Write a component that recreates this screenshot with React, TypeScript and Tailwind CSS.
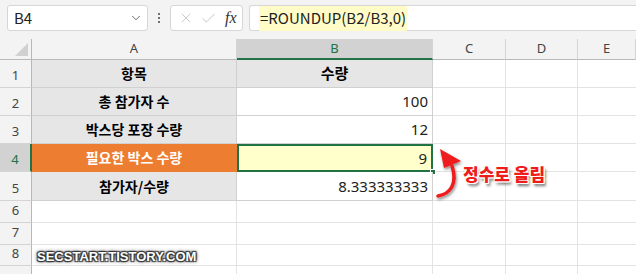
import { ChevronDown, X, Check } from "lucide-react";

const cols = ["A", "B", "C", "D", "E"];

const rows = [
  { n: 1, a: "항목", b: "수량", bHead: true, h: "h-[28px]" },
  { n: 2, a: "총 참가자 수", b: "100", h: "h-[28px]" },
  { n: 3, a: "박스당 포장 수량", b: "12", h: "h-[28px]" },
  { n: 4, a: "필요한 박스 수량", b: "9", h: "h-[28px]", active: true },
  { n: 5, a: "참가자/수량", b: "8.333333333", h: "h-[29px]" },
];

const empties = [
  { n: 6, label: "6", h: "h-[22px]" },
  { n: 7, label: "7", h: "h-[22px]" },
  { n: 8, label: "8", h: "h-[21px]" },
  { n: 9, label: "", h: "h-[22px]" },
];

const font = { fontFamily: '"Noto Sans CJK KR", "Noto Sans", sans-serif' };

const RowNum = ({ label, h, active }: { label: string; h: string; active?: boolean }) => (
  <div
    className={
      h +
      " flex items-end justify-center pb-[2px] text-[13px] border-b border-[#d4d4d4] " +
      (active
        ? "bg-[#d2d2d2] text-[#217346] border-r-2 border-r-[#217346]"
        : "bg-[#f3f3f3] text-[#444] border-r border-r-[#b8b8b8]")
    }
    style={{ fontFamily: '"Noto Sans", sans-serif' }}
  >
    {label}
  </div>
);

export default function App() {
  return (
    <div className="w-[636px] h-[274px] overflow-hidden bg-white relative" style={font}>
      {/* formula bar */}
      <div className="h-[39px] bg-[#f3f3f3] flex items-start gap-[6px] pt-[5px] pl-[7px]">
        <div className="w-[141px] h-[26px] bg-white border border-[#d6d6d6] rounded-[3px] flex items-center justify-between pl-[6px] pr-[4px]">
          <span className="text-[15px] text-[#222]">B4</span>
          <ChevronDown size={14} strokeWidth={1.5} className="text-[#555]" />
        </div>
        <div className="w-[10px] flex flex-col items-center gap-[2px] pt-[8px]">
          <span className="w-[2px] h-[2px] bg-[#444] rounded-full" />
          <span className="w-[2px] h-[2px] bg-[#444] rounded-full" />
          <span className="w-[2px] h-[2px] bg-[#444] rounded-full" />
        </div>
        <div className="w-[73px] h-[26px] bg-white border border-[#d6d6d6] rounded-[3px] flex items-center pl-[7px] gap-[6px]">
          <X size={16} strokeWidth={1} className="text-[#b0b0b0]" />
          <Check size={17} strokeWidth={1} className="text-[#b0b0b0]" />
          <span
            className="text-[16px] italic text-[#333] ml-[2px]"
            style={{ fontFamily: '"Liberation Serif", serif' }}
          >
            fx
          </span>
        </div>
        <div className="flex-1 h-[26px] bg-white border border-[#d6d6d6] border-r-0 rounded-l-[3px] flex items-center pl-[9px]">
          <span className="bg-[#fffcc8] h-[25px] flex items-center px-[1px] text-[15px] text-[#222]">
            =ROUNDUP(B2/B3,0)
          </span>
        </div>
      </div>

      {/* sheet */}
      <div className="grid grid-cols-[32px_205px_196px_73px_72px_58px]">
        {/* column headers */}
        <div className="h-[21px] bg-[#f3f3f3] border-r border-[#b8b8b8] border-b border-b-[#b8b8b8] flex items-end justify-end p-[3px]">
          <div className="w-0 h-0 border-l-[13px] border-l-transparent border-b-[13px] border-b-[#d0d0d0]" />
        </div>
        {cols.map((c) => (
          <div
            key={c}
            className={
              "h-[21px] flex items-center justify-center text-[13px] border-r border-[#d4d4d4] " +
              (c === "B"
                ? "bg-[#d2d2d2] text-[#217346] border-b-2 border-b-[#217346]"
                : "bg-[#f3f3f3] text-[#444] border-b border-b-[#b8b8b8]")
            }
            style={{ fontFamily: '"Noto Sans", sans-serif' }}
          >
            {c}
          </div>
        ))}

        {rows.map((r) => (
          <div key={r.n} className="contents">
            <RowNum label={String(r.n)} h={r.h} active={r.active} />
            <div
              className={
                r.h +
                " flex items-center justify-center text-[14px] font-bold border-r border-b " +
                (r.active
                  ? "bg-[#ed7d31] text-white border-[#ed7d31]"
                  : "bg-[#e7e6e6] text-black border-[#d0d0d0]")
              }
            >
              {r.a}
            </div>
            <div
              className={
                r.h +
                " relative flex items-center text-[15px] " +
                (r.bHead
                  ? "justify-center bg-[#e7e6e6] font-bold text-[14px] border-r border-b border-[#d0d0d0]"
                  : r.active
                  ? "justify-end pr-[4px] bg-[#ffffcc] border-2 border-[#217346] text-[#222]"
                  : "justify-end pr-[4px] bg-white border-r border-b border-[#d0d0d0] text-[#222]")
              }
              style={r.bHead ? font : { fontFamily: '"Noto Sans", sans-serif' }}
            >
              {r.b}
              {r.active && (
                <span className="absolute right-[-5px] bottom-[-5px] w-[6px] h-[6px] bg-[#217346] border border-white" />
              )}
            </div>
            <div className={r.h + " border-r border-b border-[#e3e3e3]"} />
            <div className={r.h + " border-r border-b border-[#e3e3e3]"} />
            <div className={r.h + " border-b border-[#e3e3e3]"} />
          </div>
        ))}

        {empties.map((r) => (
          <div key={r.n} className="contents">
            <RowNum label={r.label} h={r.h} />
            <div className={r.h + " border-r border-b border-[#e3e3e3]"} />
            <div className={r.h + " border-r border-b border-[#e3e3e3]"} />
            <div className={r.h + " border-r border-b border-[#e3e3e3]"} />
            <div className={r.h + " border-r border-b border-[#e3e3e3]"} />
            <div className={r.h + " border-b border-[#e3e3e3]"} />
          </div>
        ))}
      </div>

      {/* annotation arrow */}
      <svg className="absolute left-[432px] top-[144px]" width="40" height="58" viewBox="0 0 40 58">
        <defs>
          <filter id="sh" x="-50%" y="-50%" width="200%" height="200%">
            <feDropShadow dx="1" dy="2" stdDeviation="1.5" floodColor="#000" floodOpacity="0.45" />
          </filter>
        </defs>
        <g filter="url(#sh)">
          <path
            d="M6 52 C 18 50, 26 40, 20 22"
            fill="none"
            stroke="#ee1c1c"
            strokeWidth="3.5"
            strokeLinecap="round"
          />
          <path d="M8 5 L 29 17 L 12 24 Z" fill="#ee1c1c" />
        </g>
      </svg>
      <div
        className="absolute left-[463px] top-[161px] text-[17px] font-black text-[#ee1c1c]"
        style={{
          ...font,
          textShadow:
            "1px 0 0 #fff, -1px 0 0 #fff, 0 1px 0 #fff, 0 -1px 0 #fff, 1px 1px 0 #fff, -1px -1px 0 #fff, 1px -1px 0 #fff, -1px 1px 0 #fff, 2px 3px 3px rgba(0,0,0,0.6)",
        }}
      >
        정수로 올림
      </div>

      {/* watermark */}
      <div
        className="absolute left-[37px] top-[247px] text-[13px] font-bold text-white"
        style={{
          fontFamily: '"Liberation Sans", sans-serif',
          textShadow:
            "1px 1px 1px #333, -1px -1px 1px #333, 1px -1px 1px #333, -1px 1px 1px #333, 0 0 4px #000",
        }}
      >
        SECSTART.TISTORY.COM
      </div>
    </div>
  );
}
